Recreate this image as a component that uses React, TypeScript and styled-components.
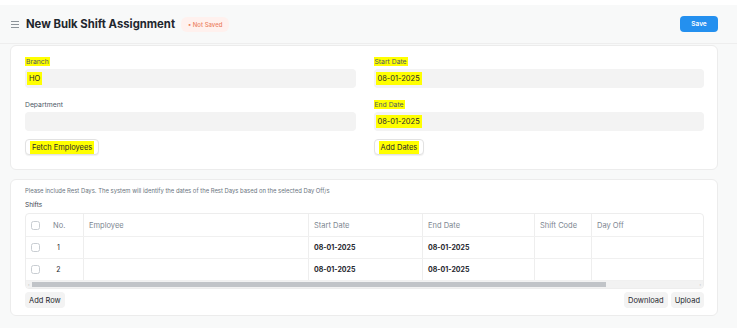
import React from "react";
import styled, { createGlobalStyle } from "styled-components";

const Global = createGlobalStyle`
  body {
    margin: 0;
    background: #f8f9f9;
    font-family: Inter, "Noto Sans", sans-serif;
    color: #1f272e;
  }
`;

const TopStrip = styled.div`
  height: 5px;
  background: #ffffff;
`;

const Header = styled.div`
  height: 39px;
  display: flex;
  align-items: center;
  padding: 0 19px 0 11px;
  border-bottom: 1px solid #eeeeee;
  box-sizing: border-box;
`;

const Burger = styled.div`
  width: 8px;
  display: flex;
  flex-direction: column;
  gap: 2px;
  margin-right: 7px;
  span {
    height: 1px;
    background: #8d949a;
  }
`;

const Title = styled.h1`
  margin: 0;
  font-size: 11.3px;
  font-weight: 700;
`;

const Pill = styled.span`
  margin-left: 6px;
  background: #fff1ee;
  color: #ec7f61;
  font-size: 6px;
  font-weight: 500;
  padding: 4px 7px;
  border-radius: 6px;
`;

const SaveBtn = styled.button`
  margin-left: auto;
  background: #2490ef;
  color: #ffffff;
  border: none;
  border-radius: 4px;
  font-family: inherit;
  font-size: 6.5px;
  font-weight: 600;
  width: 38px;
  height: 16px;
  padding: 0;
`;

const Main = styled.div`
  padding: 1px 19px 0 10px;
  display: flex;
  flex-direction: column;
  gap: 9px;
`;

const Card = styled.div<{ $pad: string }>`
  background: #ffffff;
  border: 1px solid #ececec;
  border-radius: 6px;
  padding: ${(p) => p.$pad};
`;

const Grid = styled.div`
  display: grid;
  grid-template-columns: 1fr 1fr;
  column-gap: 18px;
`;

const Column = styled.div`
  display: flex;
  flex-direction: column;
`;

const Field = styled.div`
  display: flex;
  flex-direction: column;
  gap: 2px;
  margin-bottom: 12px;
  &:nth-child(2) {
    margin-bottom: 8px;
  }
`;

const Label = styled.div`
  font-size: 6.8px;
  line-height: 10px;
  color: #4c5a67;
`;

const Mark = styled.span<{ $on?: boolean; $big?: boolean }>`
  background: ${(p) => (p.$on ? "#ffff00" : "transparent")};
  padding: ${(p) => (p.$big ? "2px 2px" : "0 1px")};
`;

const Input = styled.div`
  height: 19px;
  background: #f3f3f3;
  border-radius: 4px;
  display: flex;
  align-items: center;
  padding: 0 2px;
  font-size: 7.5px;
  color: #1f272e;
`;

const Btn = styled.button<{ $plain?: boolean }>`
  align-self: flex-start;
  height: 16px;
  padding: 0 4px;
  font-family: inherit;
  font-size: 7.5px;
  color: #1f272e;
  background: ${(p) => (p.$plain ? "#f3f3f3" : "#ffffff")};
  border: ${(p) => (p.$plain ? "none" : "1px solid #e2e2e2")};
  border-radius: 4px;
  box-shadow: ${(p) => (p.$plain ? "none" : "0 1px 1px rgba(0,0,0,0.06)")};
`;

const Note = styled.div`
  font-size: 5.9px;
  color: #6b7580;
  line-height: 10px;
`;

const SubTitle = styled.div`
  font-size: 6.5px;
  color: #3d4650;
  line-height: 10px;
  margin: 4px 0 3px;
`;

const TableWrap = styled.div`
  border: 1px solid #ededed;
  border-radius: 4px;
  overflow: hidden;
`;

const Row = styled.div<{ $head?: boolean }>`
  display: grid;
  grid-template-columns: 20px 37px 225px 114px 112px 57px 1fr;
  height: ${(p) => (p.$head ? "22px" : "21px")};
  border-bottom: 1px solid #f0f0f0;
  font-size: ${(p) => (p.$head ? "7.5px" : "7px")};
  color: ${(p) => (p.$head ? "#7c8690" : "#1f272e")};
`;

const Cell = styled.div<{ $bold?: boolean; $line?: boolean }>`
  display: flex;
  align-items: center;
  padding: 0 5px;
  border-left: ${(p) => (p.$line ? "1px solid #eeeeee" : "none")};
  font-weight: ${(p) => (p.$bold ? 700 : 400)};
  color: inherit;
`;

const CheckCell = styled.div`
  display: flex;
  align-items: center;
  padding-left: 5px;
`;

const NoCell = styled.div`
  display: flex;
  align-items: center;
  padding-left: 7px;
  span {
    min-width: 11px;
    text-align: center;
  }
`;

const Check = styled.span`
  width: 7px;
  height: 7px;
  border: 1px solid #c8cdd2;
  border-radius: 2.5px;
`;

const ScrollBar = styled.div`
  height: 7px;
  background: #f2f2f2;
  display: flex;
  align-items: center;
  padding: 0 2px;
  gap: 2px;
  font-size: 4px;
  color: #b0b0b0;
`;

const Thumb = styled.div`
  height: 5px;
  width: 574px;
  background: #c1c4c8;
`;

const Footer = styled.div`
  display: flex;
  align-items: center;
  gap: 3px;
  margin-top: 3px;
`;

const Spacer = styled.div`
  flex: 1;
`;

const rows = [1, 2];

export default function App() {
  return (
    <>
      <Global />
      <TopStrip />
      <Header>
        <Burger>
          <span />
          <span />
          <span />
        </Burger>
        <Title>New Bulk Shift Assignment</Title>
        <Pill>• Not Saved</Pill>
        <SaveBtn>Save</SaveBtn>
      </Header>
      <Main>
        <Card $pad="11px 13px 14px 14px">
          <Grid>
            <Column>
              <Field>
                <Label>
                  <Mark $on>Branch</Mark>
                </Label>
                <Input>
                  <Mark $on $big>HO</Mark>
                </Input>
              </Field>
              <Field>
                <Label>Department</Label>
                <Input />
              </Field>
              <Btn>
                <Mark $on $big>Fetch Employees</Mark>
              </Btn>
            </Column>
            <Column>
              <Field>
                <Label>
                  <Mark $on>Start Date</Mark>
                </Label>
                <Input>
                  <Mark $on $big>08-01-2025</Mark>
                </Input>
              </Field>
              <Field>
                <Label>
                  <Mark $on>End Date</Mark>
                </Label>
                <Input>
                  <Mark $on $big>08-01-2025</Mark>
                </Input>
              </Field>
              <Btn>
                <Mark $on $big>Add Dates</Mark>
              </Btn>
            </Column>
          </Grid>
        </Card>
        <Card $pad="6px 13px 7px 14px">
          <Note>
            Please include Rest Days. The system will identify the dates of the Rest Days based on
            the selected Day Off/s
          </Note>
          <SubTitle>Shifts</SubTitle>
          <TableWrap>
            <Row $head>
              <CheckCell>
                <Check />
              </CheckCell>
              <NoCell>
                <span>No.</span>
              </NoCell>
              <Cell $line>Employee</Cell>
              <Cell $line>Start Date</Cell>
              <Cell $line>End Date</Cell>
              <Cell $line>Shift Code</Cell>
              <Cell $line>Day Off</Cell>
            </Row>
            {rows.map((n) => (
              <Row key={n}>
                <CheckCell>
                  <Check />
                </CheckCell>
                <NoCell>
                  <span>{n}</span>
                </NoCell>
                <Cell $line />
                <Cell $line $bold>
                  08-01-2025
                </Cell>
                <Cell $line $bold>
                  08-01-2025
                </Cell>
                <Cell $line />
                <Cell $line />
              </Row>
            ))}
            <ScrollBar>
              ‹<Thumb />
              <Spacer />›
            </ScrollBar>
          </TableWrap>
          <Footer>
            <Btn $plain>Add Row</Btn>
            <Spacer />
            <Btn $plain>Download</Btn>
            <Btn $plain>Upload</Btn>
          </Footer>
        </Card>
      </Main>
    </>
  );
}
